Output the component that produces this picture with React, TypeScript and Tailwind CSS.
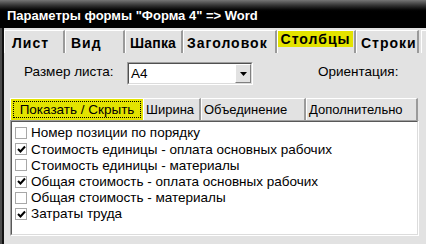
import React from "react";

const tabs = [
  { label: "Лист", w: 61, pl: 7, tr: "tracking-[1px]" },
  { label: "Вид", w: 60, pl: 5, tr: "tracking-[1px]" },
  { label: "Шапка", w: 58, pl: 4, tr: "tracking-[0.2px]" },
  { label: "Заголовок", w: 94, pl: 3, tr: "tracking-[1px]" },
  { label: "Столбцы", w: 79, active: true, pl: 0, tr: "tracking-[1px]" },
  { label: "Строки", w: 63, pl: 4, tr: "tracking-[1px]" },
];

const subTabs = [
  { label: "Ширина", w: 58 },
  { label: "Объединение", w: 105 },
  { label: "Дополнительно", w: 112 },
];

const items = [
  { label: "Номер позиции по порядку", checked: false },
  { label: "Стоимость единицы - оплата основных рабочих", checked: true },
  { label: "Стоимость единицы - материалы", checked: false },
  { label: "Общая стоимость - оплата основных рабочих", checked: true },
  { label: "Общая стоимость - материалы", checked: false },
  { label: "Затраты труда", checked: true },
];

function Check({ checked }: { checked: boolean }) {
  return (
    <div className="w-[12px] h-[12px] bg-white border border-[#a8a8a8] flex items-center justify-center shrink-0">
      {checked && (
        <svg width="9" height="9" viewBox="0 0 9 9">
          <path d="M1 4 L3.5 6.5 L8 1.5" stroke="#000" strokeWidth="2" fill="none" />
        </svg>
      )}
    </div>
  );
}

export default function App() {
  return (
    <div
      className="w-[426px] h-[244px] overflow-hidden bg-[#e2e2e2] flex flex-col"
      style={{ fontFamily: '"Liberation Sans", Arial, sans-serif' }}
    >
      {/* Title bar */}
      <div className="h-[28px] shrink-0 bg-linear-to-b from-[#767676] via-black via-45% to-black flex items-end pb-[6px] pl-[7px]">
        <span className="text-white font-bold text-[13px] leading-none">
          Параметры формы "Форма 4" =&gt; Word
        </span>
      </div>

      <div className="flex flex-1 min-h-0">
        {/* Left frame */}
        <div className="w-[4px] shrink-0 flex">
          <div className="w-[2px] bg-[#4a4a4a]" />
          <div className="w-[2px] bg-[#111]" />
        </div>

        <div className="flex-1 flex flex-col">
          {/* Main tabs */}
          <div className="flex pt-[2px] h-[25px] shrink-0">
            {tabs.map((t) => (
              <div
                key={t.label}
                style={{ width: t.w }}
                className="shrink-0 border-t border-l border-white border-r-2 border-r-[#9a9a9a] flex flex-col"
              >
                {t.active ? (
                  <div className="h-[16px] mr-[1px] bg-[#e3e300] flex items-center justify-center text-[14px] font-bold tracking-[1px] text-black leading-none">
                    Столбцы
                  </div>
                ) : (
                  <div
                    style={{ paddingLeft: t.pl }}
                    className={`flex-1 flex items-center pt-[2px] text-[14px] font-bold text-black leading-none whitespace-nowrap ${t.tr}`}
                  >
                    {t.label}
                  </div>
                )}
              </div>
            ))}
            <div className="ml-[2px] w-[10px] border-t border-l border-white" />
          </div>

          {/* Size row */}
          <div className="h-[44px] shrink-0 flex items-start pt-[11px]">
            <div className="ml-[20px] w-[103px] mt-[1px] text-[13.5px] text-black leading-none">Размер листа:</div>
            <div className="-mt-[2px] w-[126px] h-[23px] border-t border-l border-[#a0a0a0] border-b border-r border-b-white border-r-white">
              <div className="w-full h-full border-t border-l border-[#505050] border-b border-r border-b-[#dcdcdc] border-r-[#dcdcdc] bg-white flex items-center">
                <span className="ml-[2px] flex-1 text-[13.5px] leading-none text-black">A4</span>
                <div className="w-[16px] h-[19px] bg-[#e2e2e2] border-t border-l border-white border-r border-b border-r-[#808080] border-b-[#808080] flex items-center justify-center">
                  <svg width="7" height="4" viewBox="0 0 7 4">
                    <path d="M0 0 H7 L3.5 4 Z" fill="#000" />
                  </svg>
                </div>
              </div>
            </div>
            <span className="ml-[65px] mt-[1px] text-[13.5px] text-black leading-none">Ориентация:</span>
          </div>

          {/* Sub tabs */}
          <div className="flex ml-[6px] h-[22px] shrink-0 mt-[1px]">
            <div className="w-[133px] shrink-0 bg-[#e3e300] border-t border-l border-white p-[2px]">
              <div className="w-full h-full border border-dotted border-black flex items-center justify-center text-[13.5px] leading-none text-black">
                Показать / Скрыть
              </div>
            </div>
            {subTabs.map((t) => (
              <div
                key={t.label}
                style={{ width: t.w }}
                className="shrink-0 border-t border-l border-white border-r-2 border-r-[#9a9a9a] flex items-center pl-[2px] text-[13px] leading-none text-black whitespace-nowrap"
              >
                {t.label}
              </div>
            ))}
          </div>

          {/* List box */}
          <div className="ml-[6px] w-[409px] h-[116px] shrink-0 border-t border-l border-[#a0a0a0] border-b border-r border-b-white border-r-white">
            <div className="w-full h-full border-t border-l border-[#585858] border-b border-r border-b-[#dcdcdc] border-r-[#dcdcdc] bg-white pt-[3px]">
              {items.map((it) => (
                <div key={it.label} className="h-[16.2px] flex items-center pl-[3px] gap-[4px]">
                  <Check checked={it.checked} />
                  <span className="text-[13.5px] leading-none text-black">{it.label}</span>
                </div>
              ))}
            </div>
          </div>
        </div>
      </div>
    </div>
  );
}
